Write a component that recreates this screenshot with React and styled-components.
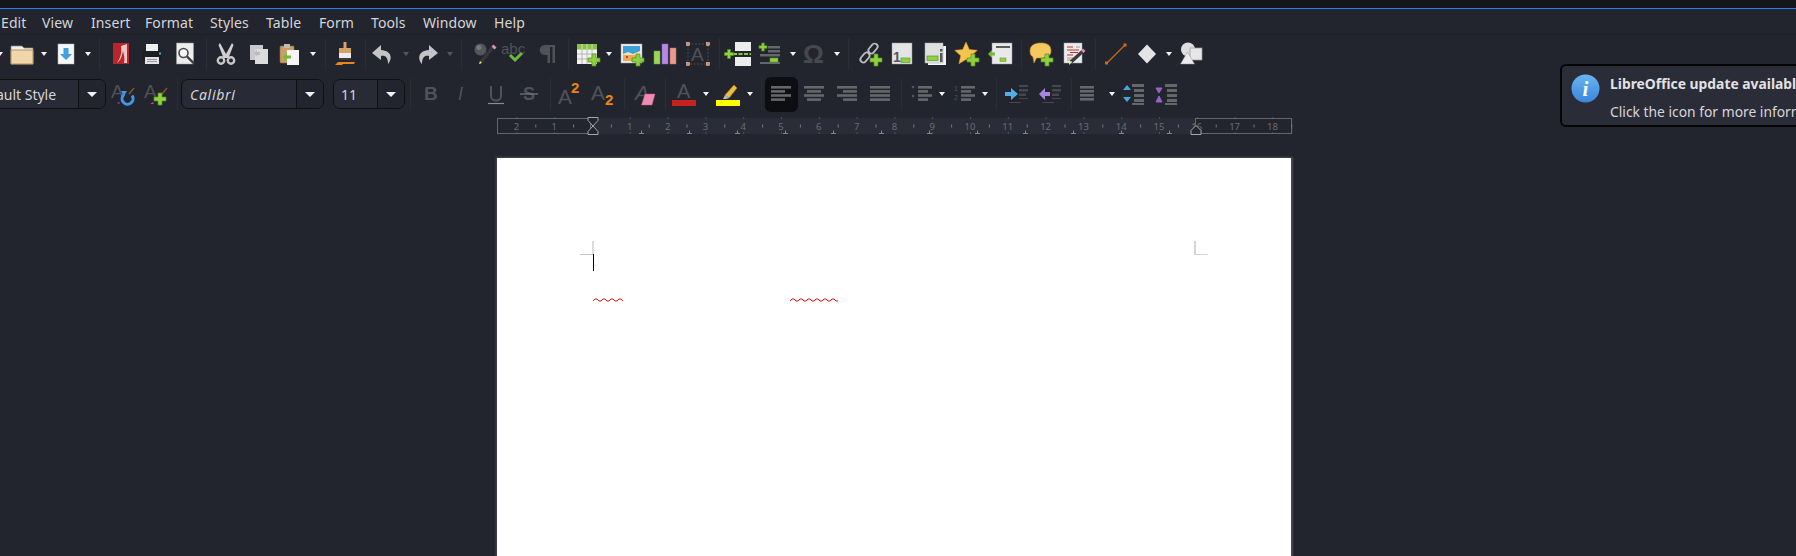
import React from "react";
import styled, { createGlobalStyle } from "styled-components";

const Global = createGlobalStyle`
  html, body { margin: 0; padding: 0; background: #22252e; overflow: hidden; }
  #root { width: 1796px; height: 556px; }
`;
const Root = styled.div`
  position: relative; width: 1796px; height: 556px; overflow: hidden;
  display: flex; flex-direction: column; background: #22252e;
  font-family: "Noto Sans", "Open Sans", sans-serif; color: #d8d8da;
`;
const TopStrip = styled.div`height: 8px; flex: none; background: #14161b;`;
const BlueLine = styled.div`height: 1px; flex: none; background: #2b80e6;`;
const MenuBar = styled.nav`
  height: 26px; flex: none; display: flex; align-items: center; padding-left: 1px;
  border-bottom: 1px solid #1e2028; font-size: 14px; padding-top: 1px; box-sizing: border-box;
`;
const MenuItem = styled.span`flex: none; width: ${p => p.$w}px; color: #d4d5d8; letter-spacing: 0.1px;`;
const Row = styled.div`
  display: flex; flex: none; align-items: center; height: ${p => p.$h}px;
  margin-left: ${p => p.$start}px; margin-top: ${p => p.$top || 0}px;
`;
const Slot = styled.div`
  flex: none; width: ${p => p.$w}px; margin-left: ${p => p.$gap}px; height: 100%;
  display: flex; align-items: center; justify-content: center;
`;
const Sep = styled.div`width: 1px; height: 32px; flex: none; background: #2a2c36;`;
const Caret = styled.div`
  flex: none; width: 0; height: 0; border-style: solid; border-color: transparent;
  border-width: ${p => p.$big ? "5px 5.5px 0" : "4px 3.5px 0"};
  border-top-color: ${p => p.$dim ? "#55575e" : "#f2f2f2"};
`;
const Combo = styled.div`
  flex: none; display: flex; align-items: stretch; width: ${p => p.$w}px; height: 30px;
  box-sizing: border-box; border: 1px solid #0f1014; border-radius: 7px; background: #282a36;
  font-size: 14px; color: #d6d6d8;
`;
const ComboText = styled.div`
  flex: 1; min-width: 0; display: flex; align-items: center; padding-left: ${p => p.$pad || 8}px;
  font-style: ${p => p.$italic ? "italic" : "normal"};
  letter-spacing: ${p => p.$italic ? "0.7px" : "0"}; white-space: nowrap;
`;
const ComboBtn = styled.div`
  flex: none; width: 26px; display: flex; align-items: center; justify-content: center;
  border-left: 1px solid #0f1014; background: #22252e; border-radius: 0 6px 6px 0;
`;
const ActiveBtn = styled.div`
  flex: none; width: 33px; height: 35px; border-radius: 6px; background: #0d0e11;
  display: flex; align-items: center; justify-content: center;
`;
const RulerWrap = styled.div`flex: none; margin: 4px 0 0 497px; width: 796px; height: 18px;`;
const Workspace = styled.div`flex: 1; min-height: 0; padding: 23px 0 0 497px;`;
const Page = styled.div`
  position: relative; width: 794px; height: 600px; background: #fff;
  box-shadow: 0 0 2px 1.5px #4b4c54;
`;
const Mark = styled.div`
  position: absolute; background: ${p => p.$c}; left: ${p => p.$x}px; top: ${p => p.$y}px;
  width: ${p => p.$w}px; height: ${p => p.$h}px;
`;
const Squiggle = styled.svg`position: absolute; left: ${p => p.$x}px; top: 140px;`;
const Toast = styled.div`
  position: absolute; left: 1560px; top: 64px; width: 320px; height: 63px; box-sizing: border-box;
  border: 2px solid #050506; border-radius: 6px; background: #2a2c38;
  display: flex; gap: 10px; padding: 8px 0 0 9px;
`;
const ToastBody = styled.div`display: flex; flex-direction: column; gap: 8px; font-size: 13.85px; line-height: 20px; white-space: nowrap;`;
const ToastTitle = styled.div`font-weight: 700; color: #e2e2e4;`;
const ToastText = styled.div`color: #d6d6d8;`;

const Ic = ({ children, w = 24, h = 24 }) => (
  <svg width={w} height={h} viewBox={`0 0 ${w} ${h}`} style={{ overflow: "visible", flex: "none" }}>{children}</svg>
);
const Plus = ({ x, y, s = 6 }) => (
  <g fill="#8fd13f" stroke="#4f8f1f" strokeWidth="0.7">
    <path d={`M${x - s / 3} ${y - s}h${s * 2 / 3}v${s * 2 / 3}h${s * 2 / 3}v${s * 2 / 3}h-${s * 2 / 3}v${s * 2 / 3}h-${s * 2 / 3}v-${s * 2 / 3}h-${s * 2 / 3}v-${s * 2 / 3}h${s * 2 / 3}z`} />
  </g>
);
const DIM = "#50525a";
const T = ({ x, y, s, c = DIM, b, i, children }) => (
  <text x={x} y={y} fontSize={s} fill={c} fontFamily="'Liberation Sans', sans-serif" fontWeight={b ? 700 : 400} fontStyle={i ? "italic" : "normal"}>{children}</text>
);
const Lines = ({ rows, x = 2, c = "#66676b" }) => rows.map((r, i) => (
  <rect key={i} x={x + (r[1] || 0)} y={4 + i * 4.1} width={r[0]} height="2.6" fill={c} />
));

const icons = {
  folder: <Ic><path d="M1 4h11l2 2h9v16H1z" fill="#efefef" stroke="#8d8674" strokeWidth=".7" /><path d="M1 8h22v14H1z" fill="#f1d6ab" stroke="#b2925f" /></Ic>,
  save: <Ic><rect x="4" y="2" width="16" height="20" fill="#f4f6f8" stroke="#bbb" strokeWidth=".5" /><path d="M9.500 6h5v6h3.500L12 18 6 12h3.500z" fill="#3f9fe2" /></Ic>,
  pdf: <Ic><rect x="4" y="1" width="16" height="21" fill="#b8262c" /><path d="M8 21c4-6 5-11 4-17 2-1 4-1 6-2v19h-3c1-4 0-8-1-12-1 5-2 9-6 12z" fill="#f2e3e3" opacity=".85" /></Ic>,
  print: <Ic><rect x="6" y="2" width="12" height="8" fill="#f0f0f0" /><rect x="2" y="9" width="20" height="10" rx="1.500" fill="#1e1f22" /><rect x="19" y="10.500" width="2" height="2" fill="#27b6e6" /><rect x="5" y="15" width="14" height="7" fill="#e4e4e4" /><path d="M7 17.500h10M7 19.500h10" stroke="#999" /></Ic>,
  preview: <Ic><rect x="3.500" y="1" width="17" height="21" fill="#ececec" stroke="#999" strokeWidth=".5" /><circle cx="10.500" cy="11" r="4.500" fill="#f6f6f6" stroke="#46484c" strokeWidth="1.600" /><path d="M14 14.500l7 7" stroke="#3a3b3e" strokeWidth="2.400" /></Ic>,
  cut: <Ic><path d="M6 1l6 11 6-11 1.500 2-5 13h-5L4.500 3z" fill="#cfcfd1" /><circle cx="7" cy="18.500" r="3.200" fill="none" stroke="#c8c8ca" strokeWidth="2.400" /><circle cx="17" cy="18.500" r="3.200" fill="none" stroke="#c8c8ca" strokeWidth="2.400" /></Ic>,
  copy: <Ic><rect x="3" y="3" width="13" height="15" fill="#c9c9cb" /><rect x="8" y="7" width="13" height="15" fill="#dcdcde" /><path d="M7 11l3-3v2h3v3h-3v2z" fill="#bcbcbe" /></Ic>,
  paste: <Ic><rect x="2" y="4" width="14" height="17" rx="1" fill="#c89e66" stroke="#8d6d42" strokeWidth=".6" /><rect x="6" y="2" width="6" height="4" fill="#bdbdbd" /><rect x="9" y="8" width="12" height="15" fill="#f6f6f6" /><path d="M5 15l4-4v2.500h4v3H9v2.500z" fill="#74bb35" /></Ic>,
  clone: <Ic><rect x="10.500" y="0" width="3" height="6" fill="#d3a367" /><rect x="6" y="6" width="12" height="5" fill="#d3a367" /><rect x="6" y="11" width="12" height="5" fill="#ededed" /><rect x="6" y="16" width="12" height="2" fill="#3c3a35" /><path d="M2 23l3-3h17l-1 2H10l-1 1z" fill="#e9861b" /></Ic>,
  undo: <Ic><path d="M10 3L1 11l9 7v-4c4-1 7 1 7 8 4-4 5-13-7-14z" fill="#c4c4c6" /></Ic>,
  redo: <Ic><path d="M14 3l9 8-9 7v-4c-4-1-7 1-7 8-4-4-5-13 7-14z" fill="#c4c4c6" /></Ic>,
  find: <Ic><circle cx="7.500" cy="7.500" r="6" fill="#55565b" /><circle cx="6" cy="5.500" r="2.500" fill="#77787d" /><path d="M20 5L8 20" stroke="#36373b" strokeWidth="3.500" /><path d="M20.500 2.500l3 3-2 2-3-3z" fill="#e58bb8" /><path d="M7 19l2 2-3 1z" fill="#f0ea7a" /></Ic>,
  spell: <Ic><T x="-2" y="12" s="15">abc</T><path d="M7 13l5 5 7-7" fill="none" stroke="#72b83a" strokeWidth="3" /></Ic>,
  pilcrow: <Ic><path d="M10 3h10v18h-2.500V5H15v16h-2.500v-8H10c-7 0-7-10 0-10z" fill={DIM} /></Ic>,
  table: <Ic><rect x="2" y="2" width="20" height="20" fill="#f2f2f2" /><path d="M2 2h20v5.500H2z" fill="#84c440" /><path d="M2 12h20M2 17h20M7 2v20M12 2v20M17 2v20" stroke="#a8a8a8" strokeWidth=".8" /><path d="M7 2v5M12 2v5M17 2v5" stroke="#d9eec0" strokeWidth=".8" /><Plus x={19} y={18} /></Ic>,
  image: <Ic><rect x="1" y="2" width="21" height="19" fill="#ededed" stroke="#aaa" strokeWidth=".5" /><rect x="3" y="4" width="17" height="8" fill="#3fa0d8" /><rect x="3" y="12" width="17" height="7" fill="#eda85a" /><path d="M3 12l5-2 5 2 7-3v4H3z" fill="#f6e4b8" /><rect x="6" y="14" width="2" height="2" fill="#d23a2a" /><Plus x={18} y={18} /></Ic>,
  chart: <Ic><rect x="1" y="9" width="6" height="13" fill="#9bd45a" stroke="#72a83a" strokeWidth=".5" /><rect x="9" y="2" width="6" height="20" fill="#b48be4" stroke="#8a62bc" strokeWidth=".5" /><rect x="17" y="6" width="6" height="16" fill="#e89a90" stroke="#c27066" strokeWidth=".5" /></Ic>,
  textbox: <Ic><rect x="2" y="2" width="20" height="20" fill="none" stroke="#4a4c54" strokeDasharray="2 1.500" /><T x="5" y="19" s="19">A</T>{[[2, 2], [22, 2], [2, 22], [22, 22]].map(([x, y], i) => <rect key={i} x={x - 1.500} y={y - 1.500} width="3" height="3" fill="#e8874a" stroke="#fff" strokeWidth=".4" />)}</Ic>,
  pagebreak: <Ic><rect x="8" y="0" width="16" height="9" fill="#ececec" /><rect x="8" y="15" width="16" height="9" fill="#ececec" /><path d="M6 12h18" stroke="#86c83f" strokeWidth="2" strokeDasharray="4 1.500" /><Plus x={2} y={12} s={4.500} /></Ic>,
  field: <Ic><Plus x={5} y={5} s={4} /><rect x="10" y="4" width="12" height="2.500" fill="#66676b" /><rect x="10" y="8" width="12" height="2.500" fill="#66676b" /><rect x="2" y="12" width="20" height="2.500" fill="#66676b" /><rect x="2" y="20" width="20" height="2" fill="#66676b" /><rect x="12" y="16" width="8" height="4" fill="#8fd13f" stroke="#5d9c28" strokeWidth=".6" /></Ic>,
  omega: <Ic><T x="0" y="21" s="26" c="#46484f" b>Ω</T></Ic>,
  link: <Ic><g fill="none" stroke="#bcbcbe" strokeWidth="1.800"><rect x="13" y="1" width="6" height="11" rx="3" transform="rotate(40 16 6.500)" /><rect x="5" y="10" width="6" height="11" rx="3" transform="rotate(40 8 15.500)" /></g><Plus x={19} y={18} /></Ic>,
  footnote: <Ic><rect x="2" y="1" width="20" height="21" fill="#e4e4e4" stroke="#999" strokeWidth=".5" /><T x="3" y="20" s="14" c="#55565a" b>1</T><rect x="11" y="16" width="9" height="4.500" fill="#8fd13f" stroke="#4f8f1f" strokeWidth=".6" /></Ic>,
  endnote: <Ic><rect x="5" y="4" width="18" height="19" fill="#f2f2f2" /><rect x="2" y="1" width="18" height="20" fill="#dfdfdf" stroke="#aaa" strokeWidth=".5" /><rect x="4" y="14" width="11" height="4.500" fill="#8fd13f" stroke="#4f8f1f" strokeWidth=".6" /><rect x="17" y="7" width="2.500" height="2.500" fill="#55565a" /><rect x="17" y="11" width="2.500" height="9" fill="#55565a" /></Ic>,
  bookmark: <Ic><path d="M11 0l3.300 7.500 8 .8-6 5.500 1.800 8-7.100-4.300L3.900 21.800l1.800-8-6-5.500 8-.8z" fill="#f7c34f" stroke="#d99a2b" strokeWidth=".5" /><Plus x={18} y={18} /></Ic>,
  crossref: <Ic><rect x="4" y="1" width="20" height="21" fill="#e9e9e9" stroke="#999" strokeWidth=".5" /><rect x="8" y="4" width="14" height="2" fill="#5a5b5e" /><rect x="12" y="16" width="6" height="3.500" fill="#8fd13f" stroke="#4f8f1f" strokeWidth=".5" /><path d="M0 12l4-4v2.500h3v3H4V16z" fill="#74bb35" /></Ic>,
  comment: <Ic><path d="M1 9c0-6 5-8 11-8s10 2 10 8c0 5-5 7-10 7-2 0-3 0-4.500 0L5 21l-1-6c-2-1-3-3-3-6z" fill="#f6c861" stroke="#c98f2d" strokeWidth=".6" /><Plus x={18} y={18} s={6} /></Ic>,
  track: <Ic><rect x="2" y="1" width="18" height="20" fill="#ececec" stroke="#aaa" strokeWidth=".5" /><path d="M5 5h6M5 8h12M8 10.500h8M5 13h6" stroke="#c62b2b" strokeWidth="1.200" /><path d="M5 16h8M5 18h5M14 5h4" stroke="#9a9a9a" /><path d="M21 9L9 20" stroke="#3a3b3e" strokeWidth="3.500" /><path d="M21 6.500l2.500 2.500-2 2-2.500-2.500z" fill="#e08ab4" /><path d="M7 21l2-2 1 1-3 3z" fill="#f0ea7a" /></Ic>,
  line: <Ic><path d="M3 21L21 3" stroke="#c9681a" strokeWidth="1.200" /><rect x="1" y="19.500" width="3" height="3" fill="#d96a10" /><rect x="19.500" y="1.500" width="3" height="3" fill="#d96a10" /></Ic>,
  diamond: <Ic><path d="M12 2.500l9 9.500-9 9.500L3 12z" fill="#e4e4e5" /></Ic>,
  shapes: <Ic><circle cx="8" cy="7.500" r="7" fill="#dedee0" /><rect x="10" y="6" width="12" height="12" fill="#e6e6e8" stroke="#999" strokeWidth=".7" /><path d="M7.500 10l7 12H.500z" fill="#ececee" stroke="#999" strokeWidth=".5" /></Ic>,

  updateStyle: <Ic><T x="-1" y="16" s="19">A</T><path d="M17 12l5-6" stroke="#7d5a2a" strokeWidth="1.500" /><path d="M5 21l3-1-1 2z" fill="#c93ba8" /><path d="M20 13.500a5.500 5.500 0 1 1-8-1" fill="none" stroke="#3f98e8" strokeWidth="3" /><path d="M9 9h6l-3 5z" fill="#3f98e8" /></Ic>,
  newStyle: <Ic><T x="-1" y="16" s="19">A</T><path d="M17 12l5-6" stroke="#7d5a2a" strokeWidth="1.500" /><path d="M5 22l3-2 1 2z" fill="#c93ba8" /><Plus x={15} y={17} s={6} /></Ic>,
  bold: <Ic><T x="5" y="18" s="19" b>B</T></Ic>,
  italic: <Ic><T x="8" y="18" s="18" i>I</T></Ic>,
  underline: <Ic><path d="M7 4v10c0 6 10 6 10 0V4" fill="none" stroke={DIM} strokeWidth="2" /><path d="M4 21.500h16" stroke="#8a8b90" strokeWidth="1.200" /></Ic>,
  strike: <Ic><T x="6" y="18" s="18" b>S</T><path d="M3 12h18" stroke="#7a7b80" strokeWidth="1.200" /></Ic>,
  sup: <Ic><T x="1" y="22" s="21">A</T><T x="14" y="11" s="15" c="#ec8612" b>2</T></Ic>,
  sub: <Ic><T x="0" y="18" s="21">A</T><T x="14" y="23" s="15" c="#ec8612" b>2</T></Ic>,
  clear: <Ic><T x="2" y="18" s="21" i>A</T><path d="M12 12h10l-3 11H8.500z" fill="#f08bb4" stroke="#c75d8d" strokeWidth=".5" /></Ic>,
  fontColor: <Ic><T x="5" y="16" s="20">A</T><rect x="0" y="18" width="24" height="6" fill="#c5211f" /></Ic>,
  highlight: <Ic><path d="M9 13L18 3l3 3-8 10z" fill="#e9bc42" stroke="#b88b20" strokeWidth=".5" /><path d="M7 17l2-4 4 3-3 1z" fill="#b9b9b9" /><rect x="0" y="18" width="24" height="6" fill="#ffff00" /></Ic>,
  left: <Ic><Lines rows={[[20], [14], [20], [14]]} /></Ic>,
  center: <Ic><Lines rows={[[20], [14, 3], [20], [14, 3]]} /></Ic>,
  right: <Ic><Lines rows={[[20], [14, 6], [20], [14, 6]]} /></Ic>,
  justify: <Ic><Lines rows={[[20], [20], [20], [20]]} /></Ic>,
  bullets: <Ic><Lines rows={[[14, 6], [10, 6], [14, 6], [10, 6]]} /><circle cx="3" cy="5" r="1.300" fill="#55565a" /><circle cx="3" cy="14" r="1.300" fill="#55565a" /></Ic>,
  numbers: <Ic><Lines rows={[[14, 6], [10, 6], [14, 6], [10, 6]]} /><T x="1" y="9" s="7">1</T><T x="1" y="18" s="7">2</T></Ic>,
  indent: <Ic><g fill="#46474c"><rect x="14" y="3" width="9" height="2" /><rect x="14" y="7" width="9" height="2.500" /><rect x="14" y="11.500" width="7" height="2.500" /><rect x="14" y="16" width="9" height="1" /><rect x="4" y="20" width="12" height="1" /></g><path d="M0 10h6V6l7 6-7 6v-4H0z" fill="#52aee8" /></Ic>,
  outdent: <Ic><g fill="#46474c"><rect x="14" y="3" width="9" height="2" /><rect x="14" y="7" width="9" height="2.500" /><rect x="14" y="11.500" width="7" height="2.500" /><rect x="14" y="16" width="9" height="1" /><rect x="4" y="20" width="12" height="1" /></g><path d="M12 10H7V6l-6 6 6 6v-4h5z" fill="#a785e0" /></Ic>,
  spacing: <Ic><g fill="#66676b"><rect x="2" y="4" width="14" height="2.600" /><rect x="2" y="8" width="14" height="2.600" /><rect x="2" y="12" width="14" height="2.600" /><rect x="2" y="16" width="14" height="2.600" /></g></Ic>,
  incPara: <Ic><g fill="#66676b"><rect x="10" y="2" width="12" height="3" /><rect x="12" y="7" width="10" height="3" /><rect x="12" y="12" width="10" height="3" /><rect x="12" y="17" width="10" height="3" /><rect x="10" y="21" width="12" height="2" /></g><path d="M1 8l4-5 4 5z" fill="#47a7dd" /><path d="M1 15l4 5 4-5z" fill="#47a7dd" /></Ic>,
  decPara: <Ic><g fill="#66676b"><rect x="10" y="2" width="12" height="3" /><rect x="12" y="7" width="10" height="3" /><rect x="12" y="12" width="10" height="3" /><rect x="12" y="17" width="10" height="3" /><rect x="10" y="21" width="12" height="2" /></g><path d="M1 6h6L4 11zM1 20h6L4 14z" fill="#9a62c8" stroke="#9a62c8" /></Ic>,
};

const I = n => icons[n];
const C = <Caret />;
const D = <Caret $dim />;
const S = <Sep />;

const row1 = [
  [0, C], [22, I("folder")], [44, C], [66, I("save")], [88, C], [99.5, S], [121, I("pdf")], [152, I("print")], [185, I("preview")],
  [206, S], [226, I("cut")], [259, I("copy")], [290, I("paste")], [313, C], [325, S], [345, I("clone")], [365, S], [383, I("undo")],
  [406, D], [427, I("redo")], [450, D], [461, S], [485, I("find")], [515, I("spell")], [547, I("pilcrow")], [568, S], [587, I("table")],
  [609, C], [632, I("image")], [665, I("chart")], [698, I("textbox")], [719, S], [739, I("pagebreak")], [770, I("field")], [793, C],
  [815, I("omega")], [837, C], [848, S], [869, I("link")], [902, I("footnote")], [935, I("endnote")], [967, I("bookmark")], [1000, I("crossref")],
  [1021, S], [1041, I("comment")], [1074, I("track")], [1095, S], [1116, I("line")], [1147, I("diamond")], [1169, C], [1192, I("shapes")],
];

const combo = (w, text, opts = {}) => (
  <Combo $w={w}>
    <ComboText $italic={opts.italic} $pad={opts.pad}>{text}</ComboText>
    <ComboBtn><Caret $big /></ComboBtn>
  </Combo>
);

const row2 = [
  [31, combo(150, "Default Style", { pad: 16 })], [124, I("updateStyle")], [157, I("newStyle")], [177, S],
  [252.5, combo(143, "Calibri", { italic: true, pad: 8 })], [369, combo(72, "11", { pad: 7 })], [410, S],
  [431, I("bold")], [462, I("italic")], [496, I("underline")], [529, I("strike")], [550, S], [569, I("sup")], [603, I("sub")], [624, S],
  [645, I("clear")], [665, S], [684, I("fontColor")], [706, C], [728, I("highlight")], [750, C], [761, S],
  [781, <ActiveBtn>{I("left")}</ActiveBtn>], [814, I("center")], [847, I("right")], [880, I("justify")], [901, S],
  [922, I("bullets")], [942, C], [965, I("numbers")], [985, C], [996, S], [1017, I("indent")], [1050, I("outdent")], [1071, S],
  [1090, I("spacing")], [1112, C], [1134, I("incPara")], [1167, I("decPara")],
];

/* every slot is centred on its item's x; the remaining distance becomes the flex gap */
const ToolRow = ({ items, h, top }) => {
  const widths = items.map((it, i) => {
    const a = i > 0 ? it[0] - items[i - 1][0] : Infinity;
    const b = i < items.length - 1 ? items[i + 1][0] - it[0] : Infinity;
    return Math.min(a, b);
  });
  const start = items[0][0] - widths[0] / 2;
  return (
    <Row $h={h} $top={top} $start={start}>
      {items.map((it, i) => {
        const gap = i === 0 ? 0 : it[0] - items[i - 1][0] - (widths[i] + widths[i - 1]) / 2;
        return <Slot key={i} $w={widths[i]} $gap={gap}>{it[1]}</Slot>;
      })}
    </Row>
  );
};

const rulerX = n => 96 + 37.8 * n;
const Ruler = () => {
  const nums = [-2, -1, 1, 2, 3, 4, 5, 6, 7, 8, 9, 10, 11, 12, 13, 14, 15, 16, 17, 18];
  const halves = [];
  for (let n = -2; n < 19; n++) halves.push(n + 0.5);
  const tabs = [1, 2, 3, 4, 5, 6, 7, 8, 9, 10, 11, 12];
  return (
    <svg width="796" height="18" viewBox="0 0 796 18" style={{ display: "block", overflow: "visible" }}>
      <rect x="0" y="1" width="796" height="16" fill="#2a2c38" />
      <rect x="0.500" y="1.500" width="93" height="15" fill="#22252e" stroke="#64666d" />
      <rect x="698.500" y="1.500" width="96" height="15" fill="#22252e" stroke="#64666d" />
      {nums.map(n => (
        <g key={n}>
          <text x={rulerX(n) - 1} y="12.500" fontSize="9.500" textAnchor="middle" fill="#6a6c73" fontFamily="'Noto Sans', sans-serif">{Math.abs(n)}</text>
          <rect x={rulerX(n) - 1} y="0.500" width="1" height="1" fill="#777" />
          <rect x={rulerX(n) - 1} y="15.500" width="1" height="1" fill="#777" />
        </g>
      ))}
      {halves.map(n => <rect key={n} x={rulerX(n) - 1} y="7.500" width="1" height="3" fill="#77797f" />)}
      {tabs.map(t => <path key={t} d={`M${96 + 48 * t - 2} 16.500h5M${96 + 48 * t + 0.500} 13.500v3`} stroke="#85878d" fill="none" />)}
      <path d="M91 0.500h10v3l-5 5.500 5 5.500v3H91v-3l5-5.500-5-5.500z" fill="#22252e" stroke="#a6a7ab" />
      <path d="M694 17.500v-4l5-5 5 5v4z" fill="#22252e" stroke="#a6a7ab" />
    </svg>
  );
};

const wave = n => {
  let d = "M0 3";
  for (let i = 0; i < n; i++) d += `l2 -2 2 0 2 2 2 0`;
  return d;
};

const menu = [["Edit", 41], ["View", 49], ["Insert", 54], ["Format", 65], ["Styles", 56], ["Table", 53], ["Form", 52], ["Tools", 52], ["Window", 71], ["Help", 40]];

export default function App() {
  return (
    <Root>
      <Global />
      <TopStrip />
      <BlueLine />
      <MenuBar>{menu.map(([m, w]) => <MenuItem key={m} $w={w}>{m}</MenuItem>)}</MenuBar>
      <ToolRow items={row1} h={38} />
      <ToolRow items={row2} h={38} top={2} />
      <RulerWrap><Ruler /></RulerWrap>
      <Workspace>
        <Page>
          <Mark $c="#c4c4c4" $x={83} $y={96} $w={13} $h={1} />
          <Mark $c="#dcdcdc" $x={95} $y={83} $w={2} $h={13} />
          <Mark $c="#000" $x={96} $y={96} $w={1} $h={17} />
          <Mark $c="#d4d4d4" $x={697} $y={83} $w={1.500} $h={14} />
          <Mark $c="#d4d4d4" $x={697} $y={96} $w={14} $h={1} />
          <Squiggle $x={96} width="30" height="6"><path d={wave(4)} fill="none" stroke="#e01010" /></Squiggle>
          <Squiggle $x={293} width="50" height="6"><path d={wave(6)} fill="none" stroke="#e01010" /></Squiggle>
        </Page>
      </Workspace>
      <Toast>
        <svg width="29" height="29" viewBox="0 0 29 29" style={{ flex: "none" }}>
          <defs><linearGradient id="g" x1="0" y1="0" x2="0" y2="1"><stop offset="0" stopColor="#6ab3f2" /><stop offset="1" stopColor="#3a86dc" /></linearGradient></defs>
          <circle cx="14.500" cy="14.500" r="14" fill="url(#g)" />
          <text x="14.500" y="22" textAnchor="middle" fontSize="21" fontWeight="700" fontStyle="italic" fill="#fff" fontFamily="'Liberation Serif', serif">i</text>
        </svg>
        <ToastBody>
          <ToastTitle>LibreOffice update available</ToastTitle>
          <ToastText>Click the icon for more information</ToastText>
        </ToastBody>
      </Toast>
    </Root>
  );
}
